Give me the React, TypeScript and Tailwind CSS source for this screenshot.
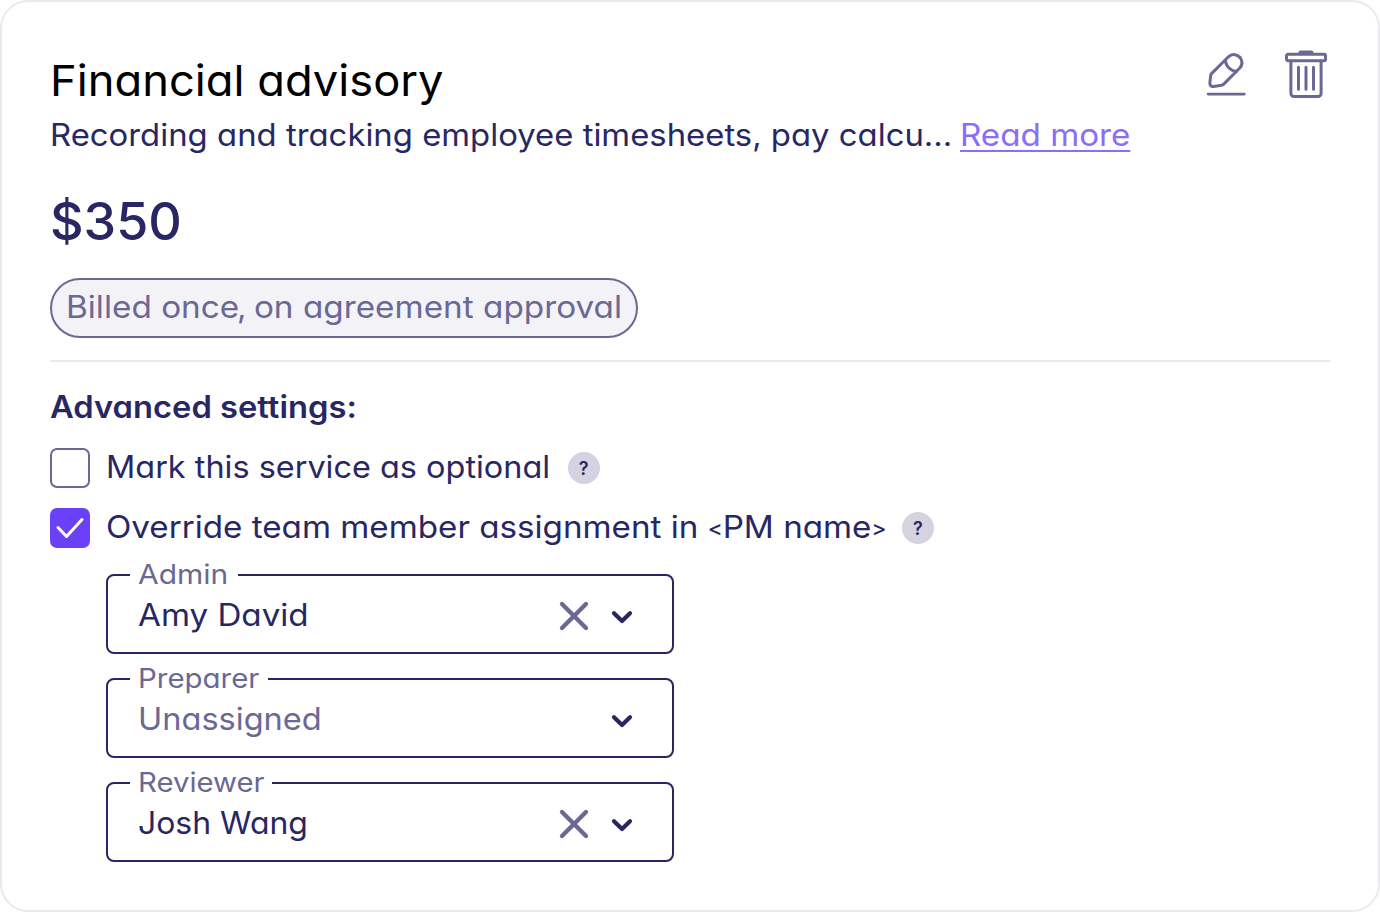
import type { ReactNode } from "react";

function PencilIcon() {
  return (
    <svg width="42" height="48" viewBox="0 0 42 48" fill="none" stroke="#6b6894" strokeWidth="3" strokeLinecap="round" strokeLinejoin="round">
      <path d="M5.3 23.9 22.4 6.8C24.6 4.7 27.4 4.1 30 5C33 6 35.2 8.3 35.8 11.2C36.3 13.8 35.6 16.2 33.8 18L18 33.9Q17 34.9 15.6 35.2L7.6 36.4C5 36.7 3.6 35.3 3.9 32.7L4.7 25.2Q4.8 24.4 5.3 23.9Z" />
      <path d="M19.3 10.2C19.7 15.9 24.4 20.8 30.4 21.4" />
      <path d="M2 44.1h36.4" strokeWidth="2.6" />
    </svg>
  );
}

function TrashIcon() {
  return (
    <svg width="44" height="50" viewBox="0 0 44 50" fill="none" stroke="#6b6894" strokeWidth="3" strokeLinecap="round" strokeLinejoin="round">
      <rect x="2.5" y="4.3" width="39" height="6.4" rx="1.4" />
      <path d="M16.3 2.4h11.4" strokeWidth="3.6" />
      <path d="M6.9 11v32.4a3.2 3.2 0 0 0 3.2 3.2h23.8a3.2 3.2 0 0 0 3.2-3.2V11" />
      <path d="M14.5 17.2v22M22 17.2v22M29.5 17.2v22" strokeWidth="3" />
    </svg>
  );
}

function Help() {
  return (
    <span className="flex size-8 items-center justify-center rounded-full bg-[#d4d3df] pt-0.5 text-[18px] leading-none font-semibold text-[#282763]">
      ?
    </span>
  );
}

function Option({ checked, label, className, children }: { checked?: boolean; label: ReactNode; className: string; children: ReactNode }) {
  return (
    <div className="flex h-10 items-center">
      <span
        className={
          checked
            ? "flex size-10 shrink-0 items-center justify-center rounded-[7px] bg-[#6b41f7]"
            : "size-10 shrink-0 rounded-[7px] border-2 border-[#6b6894] bg-white"
        }
      >
        {checked && (
          <svg width="40" height="40" viewBox="0 0 40 40" fill="none" stroke="white" strokeWidth="3" strokeLinecap="round" strokeLinejoin="round">
            <path d="M8 19.5 16.5 28.5 32 11.5" />
          </svg>
        )}
      </span>
      <span className="ml-4 flex items-center whitespace-nowrap">
        <span className={`-mt-0.5 origin-left ${className}`}>{label}</span>
        {children}
      </span>
    </div>
  );
}

interface SelectProps {
  label: string;
  value: string;
  legendClass: string;
  labelClass: string;
  valueClass: string;
  empty?: boolean;
}

function Select({ label, value, legendClass, labelClass, valueClass, empty }: SelectProps) {
  return (
    <fieldset className="h-[96px] w-[568px] rounded-[8px] border-2 border-[#282763] pr-[30px] pl-[22px]">
      <legend className={`h-[34px] px-2 text-[27px] leading-[34px] whitespace-nowrap text-[#6b6894] ${legendClass}`}>
        <span className={`inline-block origin-left ${labelClass}`}>{label}</span>
      </legend>
      <div className="flex h-[48px] items-center pl-2">
        <span className="-mt-0.5 w-[420px]">
          <span className={`inline-block origin-left ${valueClass}`}>{value}</span>
        </span>
        <svg className="size-8" viewBox="0 0 32 32" fill="none" stroke="#6b6894" strokeWidth="4.4" strokeLinecap="round">
          {!empty && <path d="M4 4 28 28M28 4 4 28" />}
        </svg>
        <svg className="ml-4 size-8" viewBox="0 0 32 32" fill="none" stroke="#282763" strokeWidth="4.2" strokeLinecap="round" strokeLinejoin="round">
          <path d="M8 13.2 16 21 24 13.2" />
        </svg>
      </div>
    </fieldset>
  );
}

export default function App() {
  return (
    <main className="h-[912px] w-[1380px] overflow-hidden rounded-[28px] border-2 border-[#e9e9ef] bg-white px-12 pt-12 font-[Inter,sans-serif] text-[31px] leading-10 text-[#282763] [font-feature-settings:'cv11']">
      <header className="flex h-[65px] justify-between pr-[2px]">
        <h1 className="origin-left scale-x-[1.053] pt-[5px] text-[43px] leading-[50px] text-black">Financial advisory</h1>
        <div className="flex gap-9">
          <PencilIcon />
          <TrashIcon />
        </div>
      </header>
      <p className="flex h-10 items-center whitespace-nowrap">
        <span className="origin-left scale-x-[1.06]">Recording and tracking employee timesheets, pay calcu...</span>
        <a className="ml-[59px] origin-left scale-x-[1.07] text-[#8a6cff] underline decoration-2 underline-offset-[4px]">Read more</a>
      </p>
      <p className="mt-[33px] h-[68px] text-[52px] leading-[68px] font-medium">$350</p>
      <div className="mt-[22px] flex h-[60px] w-[588px] items-center rounded-full border-2 border-[#6b6894] bg-[#f3f3f7] pl-[14px] whitespace-nowrap text-[#6b6894]">
        <span className="-mt-0.5 origin-left scale-x-[1.074]">
          Billed once<span className="-mr-0.5 -ml-0.5">,</span> on agreement approval
        </span>
      </div>
      <hr className="mt-[22px] border-t-2 border-[#e9e9ef]" />
      <h2 className="mt-[25px] origin-left scale-x-[1.055] font-semibold">Advanced settings:</h2>
      <div className="mt-[21px] flex flex-col gap-5">
        <Option label="Mark this service as optional" className="scale-x-[1.046]">
          <span className="ml-[37px]">
            <Help />
          </span>
        </Option>
        <Option
          checked
          label={
            <>
              Override team member assignment in <span className="align-[2px] text-[21px] leading-none font-medium">&lt;</span>PM name
              <span className="align-[2px] text-[21px] leading-none font-medium">&gt;</span>
            </>
          }
          className="w-[742px] scale-x-[1.07]"
        >
          <span className="ml-[54px]">
            <Help />
          </span>
        </Option>
      </div>
      <div className="mt-[10px] ml-14 flex flex-col gap-2">
        <Select label="Admin" value="Amy David" legendClass="w-[108px]" labelClass="scale-x-[1.11]" valueClass="scale-x-[1.07]" />
        <Select label="Preparer" value="Unassigned" legendClass="w-[138px]" labelClass="scale-x-[1.09]" valueClass="scale-x-[1.05] text-[#6b6894]" empty />
        <Select label="Reviewer" value="Josh Wang" legendClass="w-[142px]" labelClass="scale-x-[1.085]" valueClass="scale-x-[1.03]" />
      </div>
    </main>
  );
}
